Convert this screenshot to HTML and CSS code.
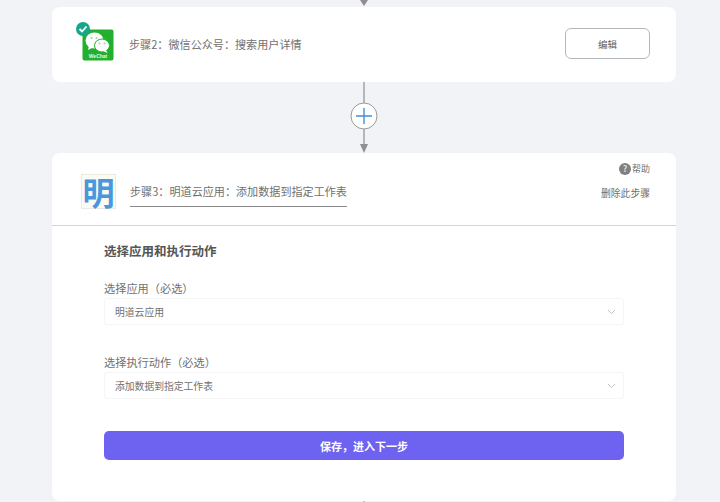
FILE: index.html
```html
<!DOCTYPE html>
<html lang="zh-CN">
<head>
    <meta charset="UTF-8">
    <meta name="viewport" content="width=device-width, initial-scale=1.0">
    <title>步骤设置</title>
    <link rel="stylesheet" href="styles.css">
</head>
<body>
    <div class="flow">
        <svg class="stub" width="12" height="7" viewBox="0 0 12 7">
            <path d="M2 0H10L6 6Z" fill="#8f8f8f"/>
        </svg>

        <div class="card step-done">
            <div class="step-logo">
                <svg width="34" height="34" viewBox="0 0 34 34">
                    <rect x="0.500" y="0.500" width="33" height="33" rx="2" fill="#fff"/>
                    <rect x="1.500" y="1.500" width="31" height="31" rx="2" fill="#23b02f"/>
                    <ellipse cx="13.500" cy="12.500" rx="9" ry="8" fill="#fff"/>
                    <path d="M8 18L7 22L13 19Z" fill="#fff"/>
                    <ellipse cx="21" cy="17.500" rx="7.500" ry="6.500" fill="#fff" stroke="#23b02f"/>
                    <path d="M25 22L26.500 25L22 23Z" fill="#fff"/>
                    <circle cx="10.500" cy="10" r="1" fill="#9ad6a0"/>
                    <circle cx="15.500" cy="10" r="1" fill="#9ad6a0"/>
                    <circle cx="18.500" cy="15.500" r="1" fill="#9ad6a0"/>
                    <circle cx="23.500" cy="15.500" r="1" fill="#9ad6a0"/>
                    <text class="wechat-text" x="17" y="30" text-anchor="middle">WeChat</text>
                </svg>
                <svg class="check-badge" width="14" height="14" viewBox="0 0 14 14">
                    <circle cx="7" cy="7" r="7" fill="#17a689"/>
                    <path d="M3.500 7L6 9.500L10.500 4.500" fill="none" stroke="#fff" stroke-width="1.800"/>
                </svg>
            </div>
            <div class="step-title step-title-done">步骤2：微信公众号：搜索用户详情</div>
            <button class="btn-edit">编辑</button>
        </div>

        <svg class="connector" width="30" height="71" viewBox="0 0 30 71">
            <path d="M15 0V21M15 47V63" stroke="#8f8f8f" stroke-width="1.200"/>
            <path d="M11 62H19L15 71Z" fill="#8f8f8f"/>
            <circle cx="15" cy="34" r="13" fill="#fff" stroke="#9a9a9a"/>
            <path d="M7 34H23M15 26V42" stroke="#3f8fd6" stroke-width="1.400"/>
        </svg>

        <div class="card step-open">
            <div class="step-head">
                <div class="ming-logo">明</div>
                <div class="step-title step-title-edit">步骤3：明道云应用：添加数据到指定工作表</div>
                <div class="step-links">
                    <a class="help-link"><span class="help-icon">?</span>帮助</a>
                    <a>删除此步骤</a>
                </div>
            </div>

            <div class="step-body">
                <h3>选择应用和执行动作</h3>

                <label class="field-label">选择应用（必选）</label>
                <div class="select-box">
                    <span>明道云应用</span>
                    <svg width="9" height="6" viewBox="0 0 9 6"><path d="M1 1L4.500 4.500L8 1" fill="none" stroke="#c4c4c4"/></svg>
                </div>

                <label class="field-label field-label-next">选择执行动作（必选）</label>
                <div class="select-box">
                    <span>添加数据到指定工作表</span>
                    <svg width="9" height="6" viewBox="0 0 9 6"><path d="M1 1L4.500 4.500L8 1" fill="none" stroke="#c4c4c4"/></svg>
                </div>

                <button class="btn-save">保存，进入下一步</button>
            </div>
        </div>

        <svg class="stub" width="12" height="1" viewBox="0 0 12 1">
            <path d="M6 0V1" stroke="#8f8f8f"/>
        </svg>
    </div>
</body>
</html>
```

FILE: styles.css
```css
* {
    margin: 0;
    padding: 0;
    box-sizing: border-box;
}

body {
    font-family: "Noto Sans CJK SC", "Noto Sans", sans-serif;
    background: #f1f3f6;
    color: #555;
    height: 502px;
    overflow: hidden;
}

.flow {
    display: flex;
    flex-direction: column;
    align-items: center;
    padding-left: 8px;
}

.stub,
.connector {
    display: block;
    flex-shrink: 0;
}

.card {
    width: 624px;
    background: #fff;
    border-radius: 8px;
}

.step-done {
    height: 75px;
    display: flex;
    align-items: center;
    padding: 0 26px 0 29px;
}

.step-logo {
    position: relative;
    width: 34px;
    height: 34px;
    margin-right: 14px;
}

.step-logo svg {
    display: block;
}

.wechat-text {
    font-family: "Liberation Sans", sans-serif;
    font-size: 5px;
    font-weight: bold;
    fill: #e4f6e6;
}

.check-badge {
    position: absolute;
    top: -6px;
    left: -5px;
}

.step-title {
    font-size: 11.100px;
    line-height: 16px;
    color: #707070;
}

.step-title-done {
    margin-bottom: 2px;
}

.btn-edit {
    margin-left: auto;
    margin-bottom: 2px;
    width: 85px;
    height: 31px;
    font-family: inherit;
    font-size: 9.500px;
    color: #606060;
    background: #fff;
    border: 1px solid #b4b8bd;
    border-radius: 6px;
}

.step-head {
    height: 73px;
    display: flex;
    align-items: flex-start;
    padding: 0 26px 0 29px;
    border-bottom: 1px solid #d4d4d4;
}

.ming-logo {
    width: 35px;
    height: 35px;
    margin-top: 21px;
    margin-right: 14px;
    font-size: 32px;
    font-weight: 700;
    line-height: 33px;
    text-align: center;
    color: #4a97de;
    background: #fbfaf3;
    border: 1px solid #eceae0;
}

.step-title-edit {
    margin-top: 30px;
    padding-bottom: 7px;
    border-bottom: 1px solid #8a8a8a;
}

.step-links {
    margin-left: auto;
    margin-top: 9px;
    display: flex;
    flex-direction: column;
    align-items: flex-end;
    gap: 10px;
    font-size: 9.800px;
    line-height: 14px;
    color: #707070;
}

.help-link {
    display: flex;
    align-items: center;
    gap: 1px;
    font-size: 9px;
}

.help-icon {
    width: 12px;
    height: 12px;
    font-size: 9px;
    font-weight: 700;
    line-height: 12px;
    text-align: center;
    color: #ddd;
    background: #808080;
    border-radius: 50%;
}

.step-body {
    padding: 16px 52px 41px;
}

.step-body h3 {
    font-size: 12.500px;
    font-weight: 700;
    line-height: 18px;
    color: #555;
    margin-bottom: 21px;
}

.field-label {
    display: block;
    font-size: 11.200px;
    line-height: 15px;
    color: #707070;
    margin-bottom: 2px;
}

.field-label-next {
    margin-top: 30px;
}

.select-box {
    height: 27px;
    display: flex;
    align-items: center;
    justify-content: space-between;
    padding: 0 7px 0 10px;
    font-size: 9.800px;
    color: #707070;
    border: 1px solid #f5f5f5;
    border-radius: 3px;
}

.btn-save {
    display: block;
    width: 100%;
    height: 29px;
    margin-top: 32px;
    font-family: inherit;
    font-size: 11px;
    font-weight: 700;
    color: #fff;
    background: #6e63f0;
    border: none;
    border-radius: 5px;
}
```
